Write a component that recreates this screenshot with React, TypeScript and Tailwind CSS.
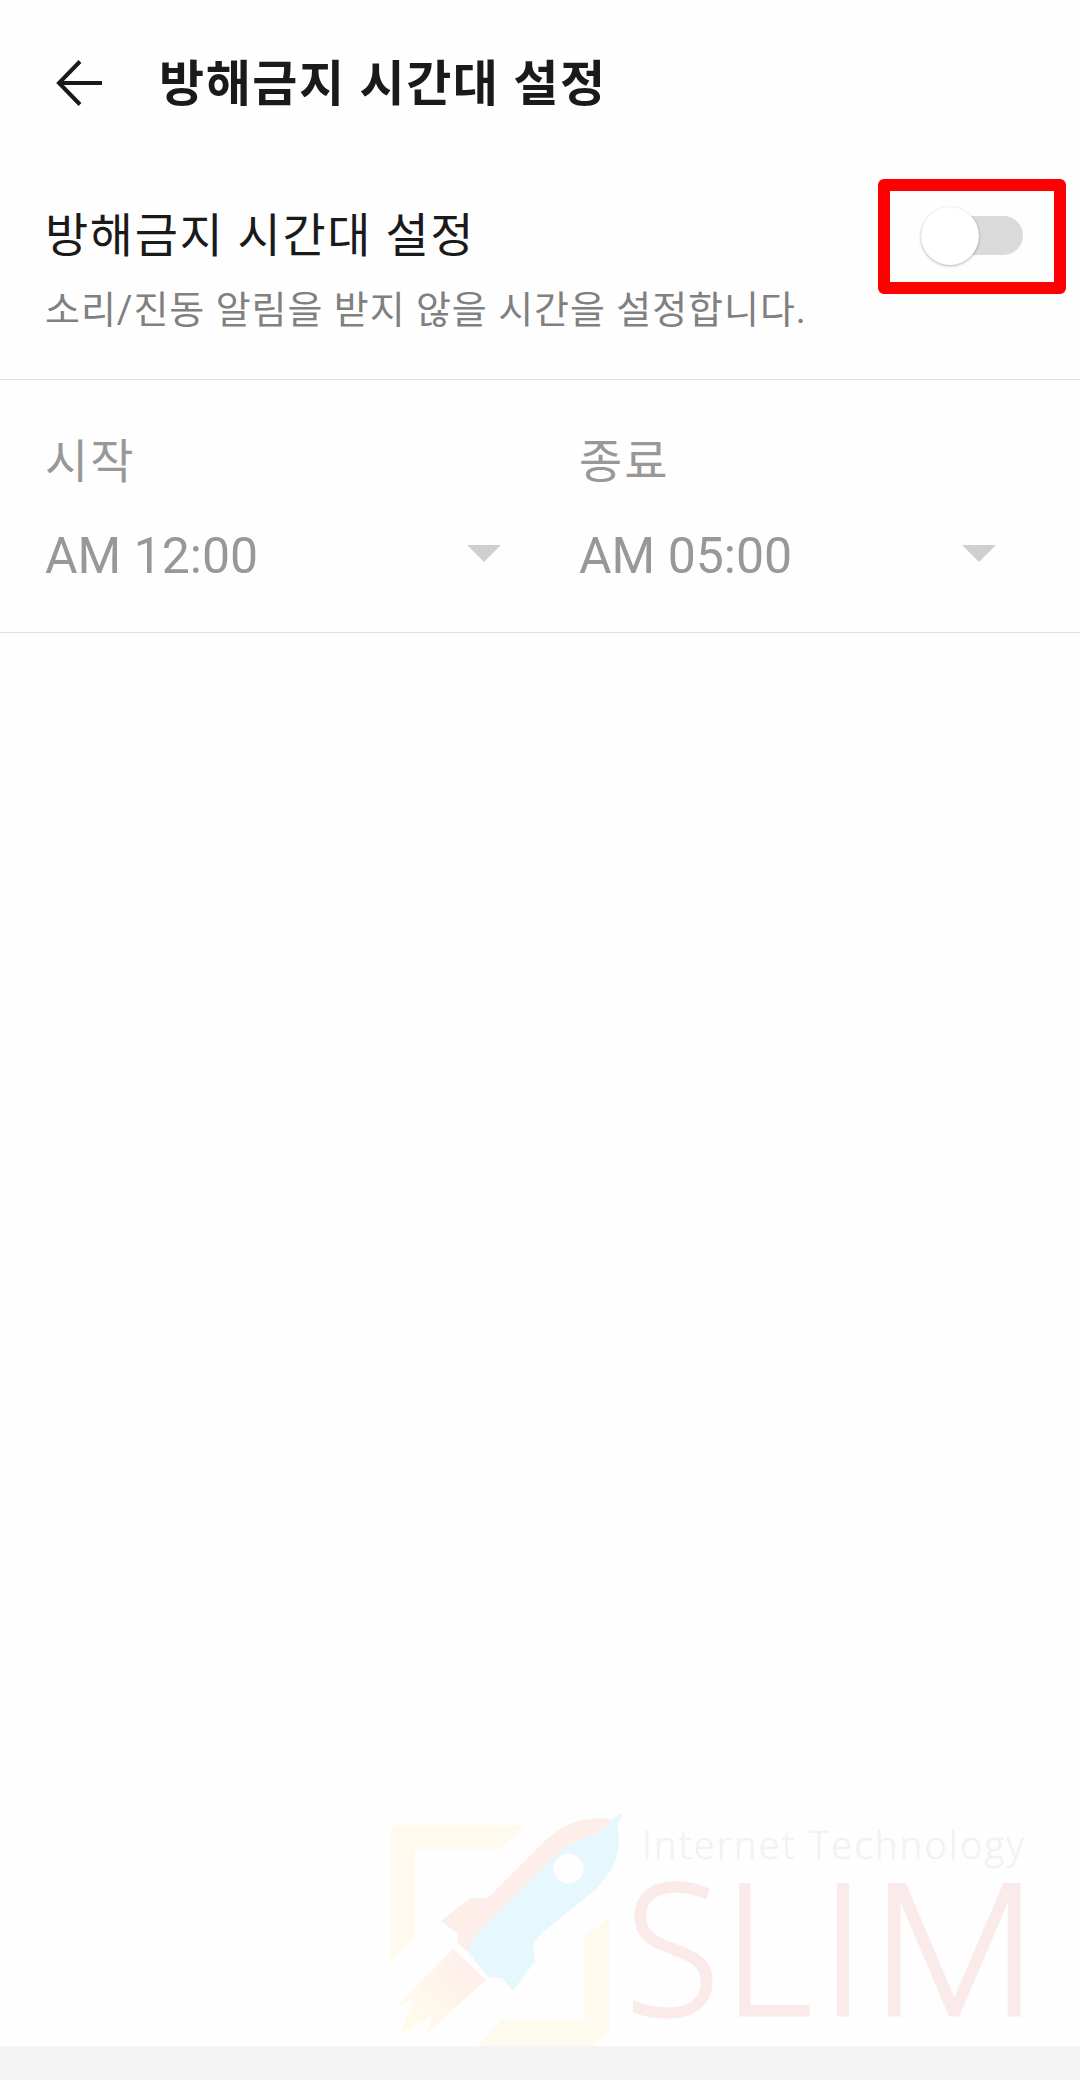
import React, { useState } from 'react';

const ArrowLeft: React.FC = () => (
  <svg className="h-[48px] w-[48px]" viewBox="0 0 48 48" fill="none" stroke="#1a1a1a" strokeWidth="4">
    <path d="M25 2.500 4 24l21 21.500M3.500 24H47" />
  </svg>
);

const Watermark: React.FC = () => (
  <svg className="pointer-events-none absolute bottom-[34px] left-[370px]" width="680" height="256" viewBox="0 0 680 256" overflow="visible">
    <defs>
      <linearGradient id="flame" x1="100" y1="170" x2="45" y2="215" gradientUnits="userSpaceOnUse">
        <stop offset="0" stopColor="#feeeea" />
        <stop offset="1" stopColor="#fffaec" />
      </linearGradient>
    </defs>
    {/* frame corners */}
    <path d="M20 175V46q0-11 11-11H156L130 59H45V145Z" fill="#fffaee" />
    <path d="M239 127V241L222 256H108L131 230H214V147Z" fill="#fffaee" />
    {/* rocket */}
    <path d="M98 162 87 152 88 144 71 131 100 108H118L171 55Q200 24 240 29L246 32 190 75 110 150Z" fill="#feeeea" />
    <path d="M241 30 252 23 253 25 247 34C253 55 247 78 226 99L171 144 163 155 165 171 143 201 132 188 118 187 98 162Q102 147 112 138L180 71Q197 53 220 46Q234 42 241 30Z" fill="#e7f7fe" />
    <circle cx="198.500" cy="78.500" r="15" fill="#fefefe" />
    <path d="M83 159 116 190 70 231 55 246 62 226 29 245 45 209 25 218 45 198Z" fill="url(#flame)" />
    <text x="272" y="69" textLength="382" fontSize="38" fill="#f2f2f2" stroke="#f2f2f2" strokeWidth="0.5" className="font-['Open_Sans'] font-light">
      Internet Technology
    </text>
    <g fontSize="182" fill="#fbeaea" stroke="#fbeaea" strokeWidth="3" className="font-['Open_Sans'] font-light">
      <text x="255" y="225" textLength="95" lengthAdjust="spacingAndGlyphs">S</text>
      <text x="353" y="225" textLength="89" lengthAdjust="spacingAndGlyphs">L</text>
      <text x="450" y="225">I</text>
      <text x="500" y="225" textLength="169" lengthAdjust="spacingAndGlyphs">M</text>
    </g>
  </svg>
);

interface TimeFieldProps {
  label: string;
  value: string;
}

const TimeField: React.FC<TimeFieldProps> = ({ label, value }) => (
  <div className="text-[#989898]">
    <div className="text-[47px] leading-[60px] tracking-[2px]">{label}</div>
    <button className="mt-[29px] flex w-full items-center justify-between text-[50px] leading-[70px]">
      <span>{value}</span>
      <svg className="mb-[5px] h-[17px] w-[34px]" viewBox="0 0 34 17">
        <path d="M0 0h34L17 17Z" fill="#cfcfcf" />
      </svg>
    </button>
  </div>
);

const App: React.FC = () => {
  const [enabled, setEnabled] = useState(false);

  return (
    <div className="relative flex h-[2080px] w-[1080px] flex-col bg-[#fefefe] font-['Roboto','Noto_Sans_CJK_KR',sans-serif] text-[#1a1a1a]">
      <header className="flex h-[166px] items-center gap-[56px] pl-[55px]">
        <button aria-label="뒤로">
          <ArrowLeft />
        </button>
        <h1 className="pt-[3px] text-[49px] leading-[70px] font-bold tracking-[1.6px]">방해금지 시간대 설정</h1>
      </header>

      <section className="flex h-[214px] justify-between border-b border-[#e0e0e0] pr-[14px] pl-[45px]">
        <div className="pt-[35px]">
          <h2 className="text-[47px] leading-[70px] tracking-[1.6px]">방해금지 시간대 설정</h2>
          <p className="mt-[9px] text-[38px] leading-[60px] tracking-[0.95px] text-[#808080]">
            소리/진동 알림을 받지 않을 시간을 설정합니다.
          </p>
        </div>
        <div className="mt-[13px] flex h-[115px] w-[188px] items-center justify-center rounded-[6px] border-[12px] border-[#fe0000] pb-[2px]">
          <button
            role="switch"
            aria-checked={enabled}
            onClick={() => setEnabled(!enabled)}
            className={`flex h-[39px] w-[102px] items-center rounded-full bg-[#dadada] ${enabled ? 'justify-end' : 'justify-start'}`}
          >
            <span className="h-[58px] w-[58px] rounded-full bg-white shadow-[0_1px_3px_rgba(0,0,0,0.3)]" />
          </button>
        </div>
      </section>

      <section className="grid h-[253px] grid-cols-[456px_417px] gap-x-[78px] border-b border-[#e0e0e0] pt-[52px] pl-[45px]">
        <TimeField label="시작" value="AM 12:00" />
        <TimeField label="종료" value="AM 05:00" />
      </section>

      <main className="flex-1" />
      <Watermark />
      <footer className="h-[34px] bg-[#f4f4f4]" />
    </div>
  );
};

export default App;
